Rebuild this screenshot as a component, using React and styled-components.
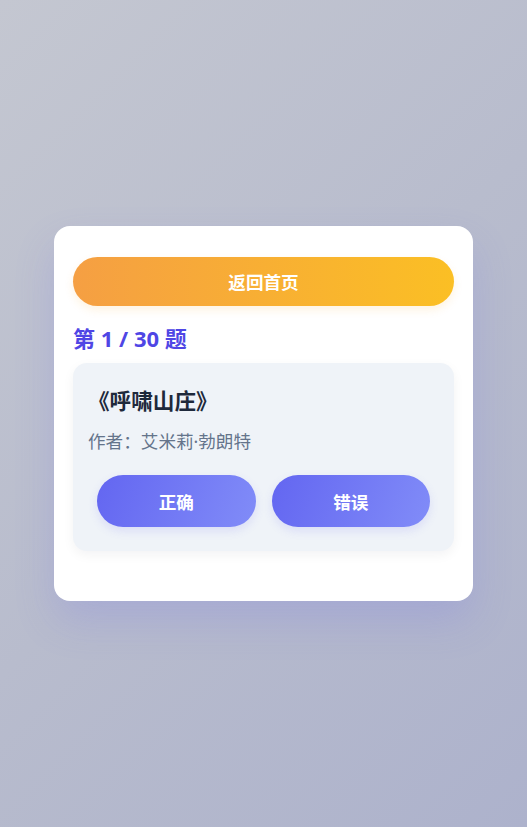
import React from "react";
import styled, { createGlobalStyle } from "styled-components";

const GlobalStyle = createGlobalStyle`
	html, body {
		margin: 0;
		padding: 0;
	}
	body {
		font-family: "Noto Sans", "Noto Sans CJK SC", sans-serif;
	}
	* {
		box-sizing: border-box;
	}
`;

const Page = styled.div`
	min-height: 100vh;
	display: flex;
	align-items: center;
	justify-content: center;
	background: linear-gradient(135deg, #c4c7d1 0%, #b8bccd 50%, #adb2cc 100%);
`;

const Card = styled.div`
	width: 419px;
	background: #ffffff;
	border-radius: 16px;
	padding: 31px 19px 50px;
	box-shadow: 0 20px 40px rgba(99, 102, 241, 0.18);
`;

const HomeButton = styled.button`
	display: block;
	width: 100%;
	height: 49px;
	border: none;
	border-radius: 999px;
	background: linear-gradient(90deg, #f59f43 0%, #fbbf24 100%);
	color: #ffffff;
	font-family: inherit;
	font-size: 17.6px;
	font-weight: 700;
	cursor: pointer;
	box-shadow: 0 4px 10px rgba(245, 158, 11, 0.12);
`;

const Progress = styled.h2`
	margin: 20px 0 13px;
	font-size: 22px;
	line-height: 24px;
	font-weight: 700;
	color: #4f46e5;
`;

const QuestionPanel = styled.div`
	background: #eff3f8;
	border-radius: 14px;
	padding: 23px 24px 24px;
	box-shadow: 0 4px 12px rgba(15, 23, 42, 0.05);
`;

const BookTitle = styled.h3`
	margin: 0 0 13px -9px;
	font-size: 21.6px;
	line-height: 30px;
	font-weight: 700;
	color: #1e293b;
`;

const Author = styled.p`
	margin: 0 0 22px -9px;
	font-size: 17.6px;
	line-height: 24px;
	color: #64748b;
`;

const Choices = styled.div`
	display: grid;
	grid-template-columns: 1fr 1fr;
	gap: 16px;
`;

const ChoiceButton = styled.button`
	height: 52px;
	border: none;
	border-radius: 999px;
	background: linear-gradient(110deg, #6366f1 0%, #818cf8 100%);
	color: #ffffff;
	font-family: inherit;
	font-size: 17.6px;
	font-weight: 700;
	cursor: pointer;
	box-shadow: 0 4px 10px rgba(99, 102, 241, 0.15);
`;

export default function App() {
	const current = 1;
	const total = 30;

	return (
		<>
			<GlobalStyle />
			<Page>
				<Card>
					<HomeButton>返回首页</HomeButton>
					<Progress>
						第 {current} / {total} 题
					</Progress>
					<QuestionPanel>
						<BookTitle>《呼啸山庄》</BookTitle>
						<Author>作者：艾米莉·勃朗特</Author>
						<Choices>
							<ChoiceButton>正确</ChoiceButton>
							<ChoiceButton>错误</ChoiceButton>
						</Choices>
					</QuestionPanel>
				</Card>
			</Page>
		</>
	);
}
